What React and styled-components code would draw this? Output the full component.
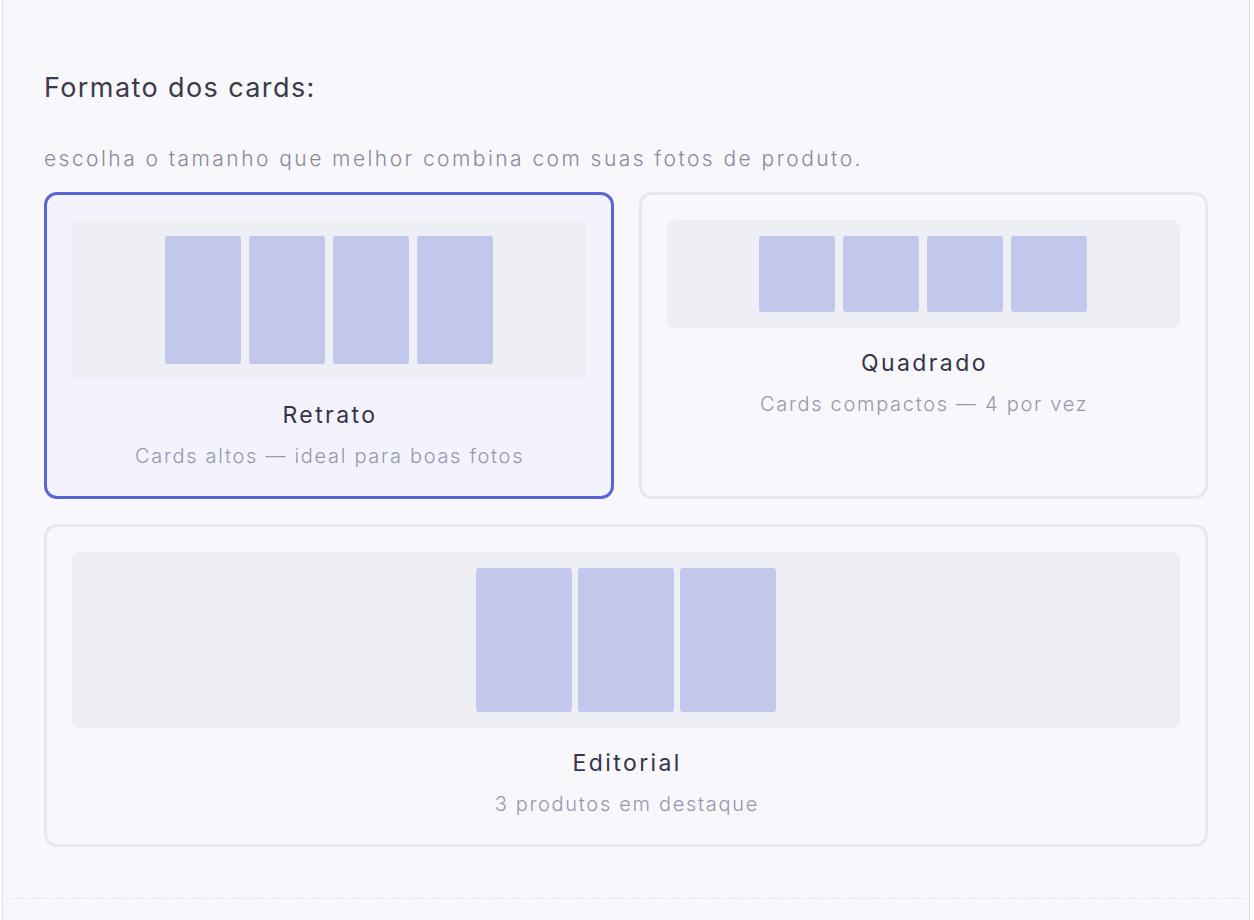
import React from 'react'
import styled, { createGlobalStyle } from 'styled-components'

const GlobalStyle = createGlobalStyle`
  html, body {
    margin: 0;
    padding: 0;
    background: #ffffff;
    font-family: Inter, "Noto Sans", sans-serif;
  }
  * { box-sizing: border-box; }
`

const formats = [
  { id: 'retrato', title: 'Retrato', desc: 'Cards altos — ideal para boas fotos', count: 4, w: 76, h: 128, gap: 8 },
  { id: 'quadrado', title: 'Quadrado', desc: 'Cards compactos — 4 por vez', count: 4, w: 76, h: 76, gap: 8 },
  { id: 'editorial', title: 'Editorial', desc: '3 produtos em destaque', count: 3, w: 96, h: 144, gap: 6, wide: true },
]

function App() {
  const selected = 'retrato'
  return (
    <>
      <GlobalStyle />
      <Panel>
        <Section>
          <Heading>Formato dos cards:</Heading>
          <Hint>escolha o tamanho que melhor combina com suas fotos de produto.</Hint>
          <Options>
            {formats.map((f) => (
              <Option key={f.id} $active={f.id === selected} $wide={f.wide}>
                <Preview>
                  {Array.from({ length: f.count }).map((_, i) => (
                    <Thumb key={i} $w={f.w} $h={f.h} $gap={f.gap} />
                  ))}
                </Preview>
                <OptionTitle>{f.title}</OptionTitle>
                <OptionDesc>{f.desc}</OptionDesc>
              </Option>
            ))}
          </Options>
        </Section>
        <Separator />
      </Panel>
    </>
  )
}

export default App

const Panel = styled.div`
  margin-left: 2px;
  width: 1248px;
  min-height: 920px;
  background: #f7f7fc;
  border-left: 1px solid #dde0ef;
  border-right: 1px solid #dde0ef;
`

const Section = styled.section`
  padding: 70px 41px 51px 41px;
`

const Heading = styled.h3`
  margin: 0;
  font-size: 27px;
  line-height: 36px;
  font-weight: 400;
  letter-spacing: 1.4px;
  color: #3b3b48;
`

const Hint = styled.p`
  margin: 39px 0 19px;
  font-size: 21px;
  line-height: 28px;
  font-weight: 300;
  letter-spacing: 2.45px;
  color: #8a8a98;
`

const Options = styled.div`
  display: grid;
  grid-template-columns: 1fr 1fr;
  gap: 25px;
`

const Option = styled.div`
  grid-column: ${(p) => (p.$wide ? '1 / span 2' : 'auto')};
  display: flex;
  flex-direction: column;
  align-items: center;
  padding: 25px 25px 26px;
  border: 3px solid ${(p) => (p.$active ? '#5a66d6' : '#e7e7ee')};
  border-radius: 13px;
  background: ${(p) => (p.$active ? '#f2f3fd' : '#f7f7fc')};
`

const Preview = styled.div`
  width: 100%;
  display: flex;
  justify-content: center;
  padding: 16px;
  border-radius: 8px;
  background: #eeeff4;
`

const Thumb = styled.div`
  width: ${(p) => p.$w}px;
  height: ${(p) => p.$h}px;
  margin-left: ${(p) => p.$gap}px;
  border-radius: 3px;
  background: #c2c7ec;
  &:first-child { margin-left: 0; }
`

const OptionTitle = styled.div`
  margin-top: 20px;
  font-size: 23px;
  line-height: 30px;
  font-weight: 400;
  letter-spacing: 2.4px;
  text-indent: 2.4px;
  color: #35354a;
`

const OptionDesc = styled.div`
  margin-top: 12px;
  font-size: 20px;
  line-height: 28px;
  font-weight: 300;
  letter-spacing: 1.7px;
  text-indent: 1.7px;
  color: #9898ad;
`

const Separator = styled.hr`
  margin: 0 3px;
  border: 0;
  border-top: 1px dashed #e1e2ec;
`
